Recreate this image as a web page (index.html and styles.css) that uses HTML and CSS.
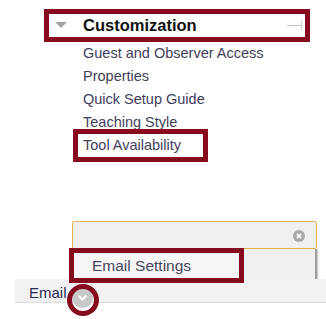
FILE: index.html
```html
<!DOCTYPE html>
<html lang="en">
<head>
    <meta charset="UTF-8">
    <title>Customization menu</title>
    <link rel="stylesheet" href="styles.css">
</head>
<body>

    <!-- Customization section of the control panel -->
    <div class="panel">
        <div class="section-head">
            <span class="toggle"></span>
            <span class="section-title">Customization</span>
            <svg class="drag" width="16" height="10" viewBox="0 0 16 10">
                <line x1="0" y1="4.5" x2="14" y2="4.5" stroke="#c4c4c4" stroke-width="1"/>
                <line x1="14.5" y1="0" x2="14.5" y2="9" stroke="#cfcfcf" stroke-width="1"/>
            </svg>
        </div>
        <ul class="menu">
            <li>Guest and Observer Access</li>
            <li>Properties</li>
            <li>Quick Setup Guide</li>
            <li>Teaching Style</li>
            <li><span class="mark">Tool Availability</span></li>
        </ul>
    </div>

    <!-- Search box with results dropdown -->
    <div class="search">
        <span class="clear">
            <svg width="12" height="12" viewBox="0 0 12 12">
                <circle cx="6" cy="6" r="6" fill="#a9a9a9"/>
                <path d="M3.8 3.8 L8.2 8.2 M8.2 3.8 L3.8 8.2" stroke="#fff" stroke-width="1.8"/>
            </svg>
        </span>
    </div>
    <div class="results">
        <div class="result mark">Email Settings</div>
    </div>

    <!-- Tool row -->
    <div class="tool-row">
        <span class="tool-name">Email</span>
        <span class="chevron">
            <svg width="21" height="21" viewBox="0 0 21 21">
                <circle cx="10.5" cy="10.5" r="10.5" fill="#c8c8c8"/>
                <path d="M6.5 8.5 L10.5 12.5 L14.5 8.5" fill="none" stroke="#fff" stroke-width="2"/>
            </svg>
            <span class="ring"></span>
        </span>
    </div>

</body>
</html>
```

FILE: styles.css
```css
* {
    margin: 0;
    padding: 0;
    box-sizing: border-box;
}

body {
    font-family: "Liberation Sans", Arial, sans-serif;
    background-color: #fff;
    width: 326px;
    height: 319px;
    overflow: hidden;
}

.panel {
    padding-top: 9px;
}

.section-head {
    display: flex;
    align-items: center;
    margin-left: 44px;
    width: 266px;
    height: 33px;
    padding-left: 6px;
    border: 5px solid #860b1e;
}

.toggle {
    width: 0;
    height: 0;
    border-left: 6px solid transparent;
    border-right: 6px solid transparent;
    border-top: 6px solid #a3a3a3;
    margin-right: 16px;
    margin-top: -2px;
}

.section-title {
    font-size: 16.5px;
    font-weight: bold;
    line-height: 23px;
    color: #111;
}

.drag {
    margin-left: auto;
    margin-right: 2px;
    margin-top: 1px;
}

.menu {
    list-style: none;
    padding-left: 83px;
}

.menu li {
    font-size: 14.5px;
    line-height: 23px;
    color: #3e3e5a;
}

.mark {
    outline: 5px solid #860b1e;
}

.menu .mark {
    display: inline-block;
    margin-left: -5px;
    padding-left: 5px;
    width: 125px;
    height: 23px;
    margin-top: -1px;
}

.search {
    display: flex;
    justify-content: flex-end;
    align-items: center;
    margin-top: 64px;
    margin-left: 72px;
    width: 245px;
    height: 28px;
    padding-right: 11px;
    background-color: #f0f0f0;
    border: 1px solid #e5b252;
    border-radius: 2px;
}

.clear {
    display: flex;
    margin-top: 2px;
}

.results {
    margin-left: 72px;
    width: 245px;
    height: 30px;
    padding-top: 4px;
    padding-left: 2px;
    background-color: #f0f0f0;
    border-right: 2px solid #9d9d9d;
    box-shadow: 1px 1px 2px rgba(0, 0, 0, 0.25);
}

.result {
    width: 165px;
    height: 25px;
    padding-left: 18px;
    font-size: 15.5px;
    line-height: 25px;
    color: #464660;
    background-color: #f6f6f6;
}

.tool-row {
    display: flex;
    align-items: flex-start;
    margin-left: 15px;
    height: 24px;
    padding-top: 6px;
    padding-left: 14px;
    background-color: #f2f2f2;
    border-bottom: 1px solid #dcdcdc;
}

.tool-name {
    font-size: 15px;
    line-height: 16px;
    color: #2c2c55;
}

.chevron {
    position: relative;
    display: flex;
    margin-left: 5px;
    margin-top: 2px;
}

/* annotation ring drawn over the menu button */
.ring {
    position: absolute;
    left: -5px;
    top: -3px;
    width: 32px;
    height: 32px;
    border: 5px solid #860b1e;
    border-radius: 50%;
}
```
